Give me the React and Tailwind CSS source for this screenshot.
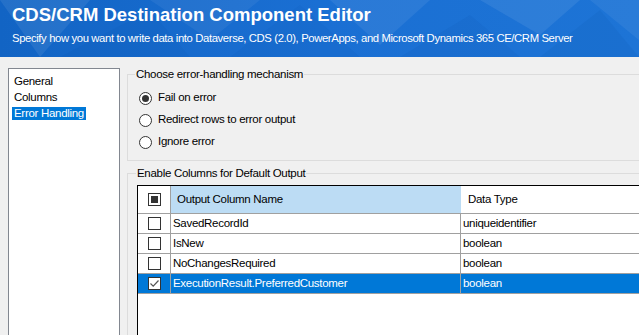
const FONT = { fontFamily: '"Liberation Sans", Arial, sans-serif' }

const rows = [
  { name: 'SavedRecordId', type: 'uniqueidentifier' },
  { name: 'IsNew', type: 'boolean' },
  { name: 'NoChangesRequired', type: 'boolean' },
  { name: 'ExecutionResult.PreferredCustomer', type: 'boolean', selected: true, checked: true },
]

function HeaderTexture() {
  // low-poly triangles over the blue banner
  const tris = [
    ['0,0 90,0 40,57', 0.08],
    ['60,57 150,10 190,57', 0.1],
    ['150,0 260,0 210,40', 0.06],
    ['230,57 300,5 360,57', 0.09],
    ['330,0 430,0 380,45', 0.07],
    ['400,57 470,15 520,57', 0.1],
    ['480,0 580,0 540,35', 0.08],
    ['540,57 600,10 639,57', 0.12],
    ['590,0 639,0 639,40', 0.06],
  ]
  return (
    <svg className="absolute inset-0" width="639" height="57" viewBox="0 0 639 57">
      {tris.map(([p, o], i) => (
        <polygon key={i} points={p} fill={i % 2 ? '#0a4fa6' : '#ffffff'} opacity={o} />
      ))}
    </svg>
  )
}

function Radio({ checked, label }) {
  return (
    <div className="flex h-[22px] items-center gap-[6px]">
      <span className="flex h-[13px] w-[13px] items-center justify-center rounded-full border border-[#333] bg-white">
        {checked && <span className="h-[7px] w-[7px] rounded-full bg-[#333]" />}
      </span>
      <span>{label}</span>
    </div>
  )
}

function Check({ state }) {
  return (
    <span className="flex h-[13px] w-[13px] items-center justify-center border border-[#333] bg-white">
      {state === 'mixed' && <span className="h-[7px] w-[7px] bg-[#333]" />}
      {state === 'on' && (
        <svg width="11" height="11" viewBox="0 0 11 11">
          <path d="M1.5 5.5 L4.2 8.2 L9.5 2.5" fill="none" stroke="#555" strokeWidth="1.2" />
        </svg>
      )}
    </span>
  )
}

export default function App() {
  return (
    <div className="relative h-[335px] w-[639px] overflow-hidden bg-[#f0f0f0] text-[11.5px] tracking-[-0.3px] text-black" style={FONT}>
      {/* banner */}
      <div className="relative h-[57px] bg-gradient-to-r from-[#1264c4] via-[#1a6fd3] to-[#1d74d6] px-[12px] pt-[4px] tracking-normal text-white">
        <HeaderTexture />
        <div className="relative text-[18.5px] font-bold leading-[22px]">CDS/CRM Destination Component Editor</div>
        <div className="relative mt-[5px] whitespace-nowrap text-[11.3px] leading-[14px] tracking-[-0.38px]">
          Specify how you want to write data into Dataverse, CDS (2.0), PowerApps, and Microsoft Dynamics 365 CE/CRM Server
        </div>
      </div>

      <div className="flex pl-[8px] pt-[11px]">
        {/* page list */}
        <div className="h-[300px] w-[112px] shrink-0 border border-[#828790] bg-white pl-[3px] pt-[2px]">
          {['General', 'Columns', 'Error Handling'].map((t, i) => (
            <div key={t} className="h-[16px] pt-[2px]">
              <span className={`inline-block h-[13px] px-[2px] leading-[13px] ${i === 2 ? 'bg-[#0078d7] text-white' : ''}`}>{t}</span>
            </div>
          ))}
        </div>

        <div className="ml-[7px] flex w-[540px] shrink-0 flex-col pt-[6px]">
          {/* error handling group */}
          <div className="relative h-[87px] border border-[#dcdcdc] pl-[11px] pt-[12px]">
            <span className="absolute -top-[8px] left-[7px] bg-[#f0f0f0] px-[1px] leading-[14px]">Choose error-handling mechanism</span>
            <Radio checked label="Fail on error" />
            <Radio label="Redirect rows to error output" />
            <Radio label="Ignore error" />
          </div>

          {/* columns group */}
          <div className="relative mt-[12px] h-[200px] border border-[#dcdcdc] pl-[9px] pt-[11px]">
            <span className="absolute -top-[8px] left-[8px] bg-[#f0f0f0] px-[1px] leading-[14px]">Enable Columns for Default Output</span>
            <div className="h-full border-l border-t border-black bg-white">
              <div className="flex h-[28px] border-b border-[#a0a0a0]">
                <div className="flex w-[33px] items-center justify-center border-r border-[#a0a0a0]">
                  <Check state="mixed" />
                </div>
                <div className="flex w-[290px] items-center bg-[#bcdcf4] pl-[6px]">Output Column Name</div>
                <div className="flex flex-1 items-center pl-[7px]">Data Type</div>
              </div>
              {rows.map((r) => (
                <div
                  key={r.name}
                  className={`flex h-[20px] border-b border-[#a0a0a0] ${r.selected ? 'bg-[#0078d7] text-white' : ''}`}
                >
                  <div className="flex w-[33px] items-center justify-center border-r border-[#a0a0a0]">
                    <Check state={r.checked ? 'on' : 'off'} />
                  </div>
                  <div className="flex w-[290px] items-center border-r border-[#a0a0a0] pl-[2px]">{r.name}</div>
                  <div className="flex flex-1 items-center pl-[2px]">{r.type}</div>
                </div>
              ))}
            </div>
          </div>
        </div>
      </div>
    </div>
  )
}
